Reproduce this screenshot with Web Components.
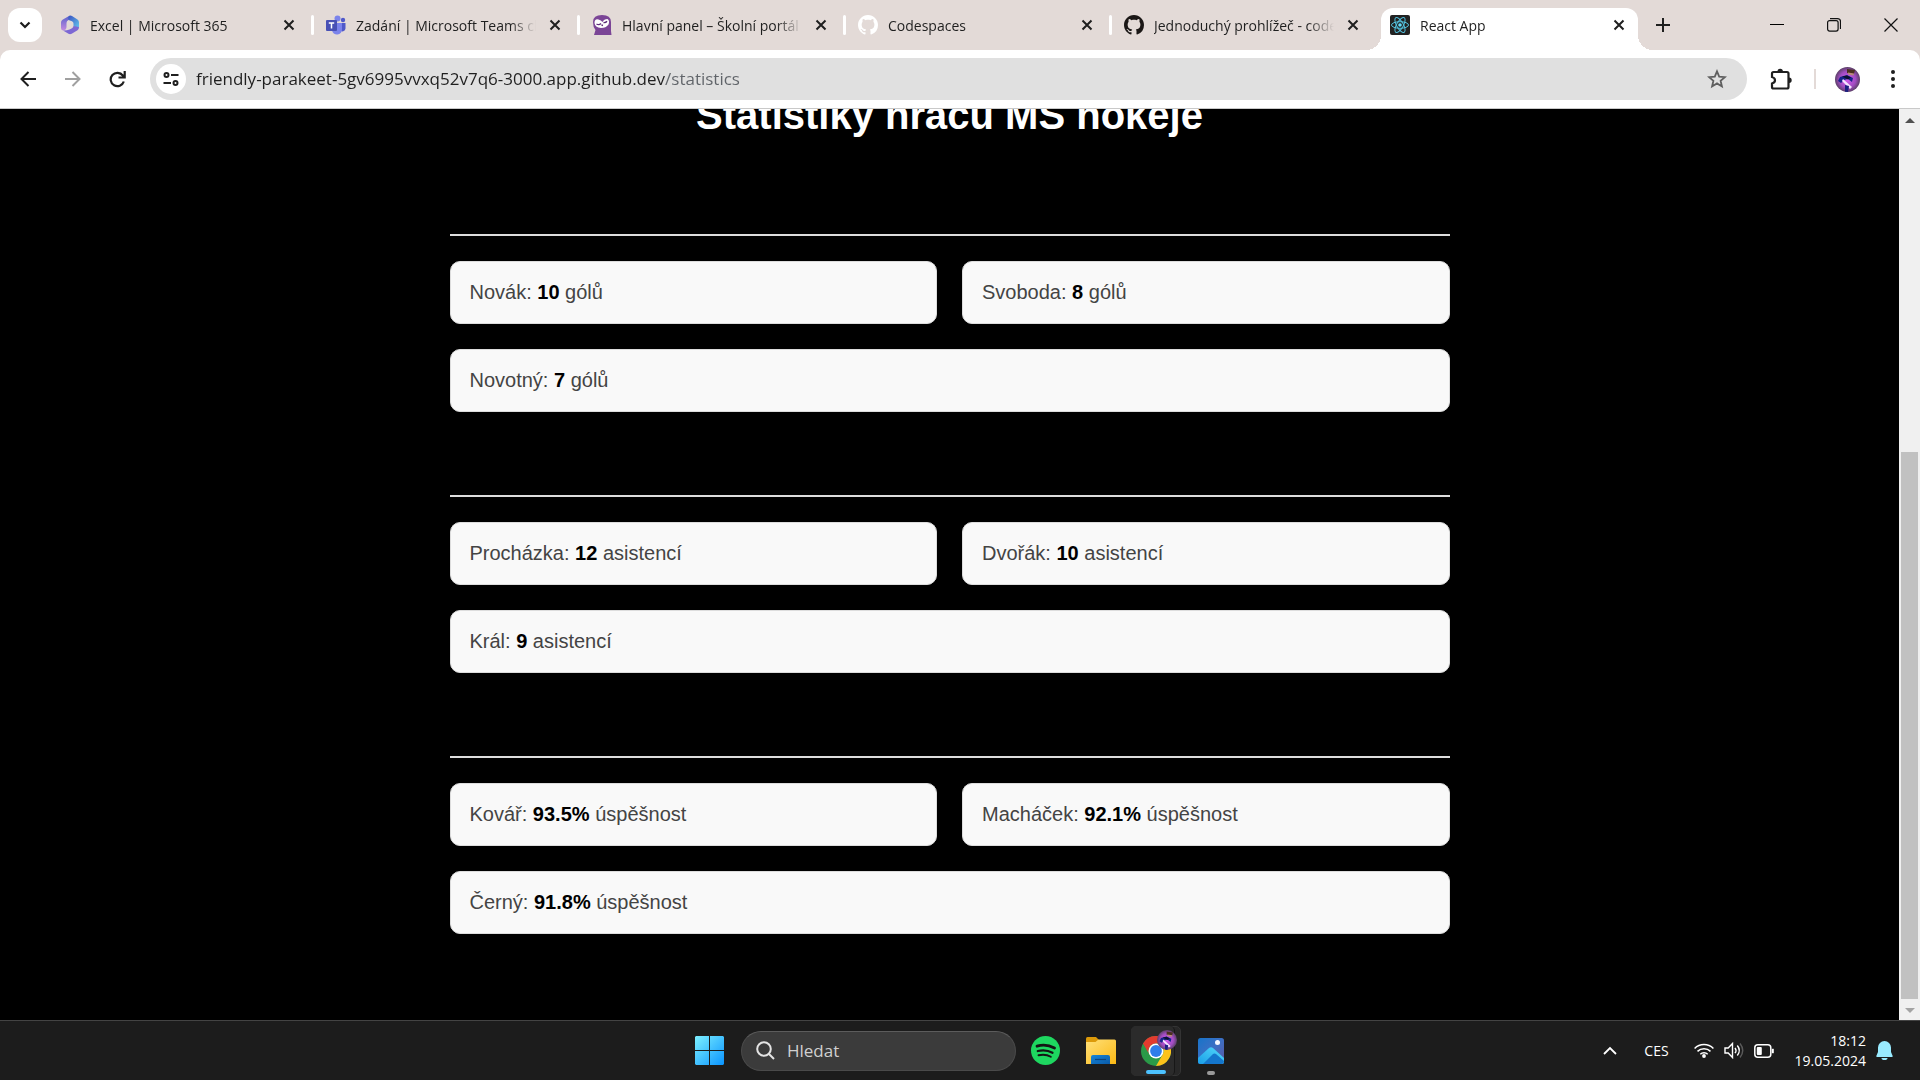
<!DOCTYPE html>
<html lang="cs">
<head>
<meta charset="utf-8">
<title>React App</title>
<style>
  html, body { height: 100%; margin: 0; }
  body { background: #000; overflow: hidden; font-family: "Open Sans", "Noto Sans", sans-serif; }
</style>
</head>
<body>
<desktop-screen></desktop-screen>

<template id="t-desktop">
  <style>
    :host { display: flex; flex-direction: column; height: 100vh; }
    .view { flex: 1; min-height: 0; display: flex; border-top: 1px solid #c9c9c9; }
    stats-page { flex: 1; min-width: 0; }
  </style>
  <tab-strip>
    <browser-tab label="Excel | Microsoft 365">
      <svg slot="icon" width="20" height="20" viewBox="0 0 20 20"><defs><linearGradient id="m1" x1="0" y1="0" x2="1" y2="1"><stop offset="0" stop-color="#3a4fc0"/><stop offset="1" stop-color="#63c9ee"/></linearGradient><linearGradient id="m2" x1="0" y1="0" x2="0" y2="1"><stop offset="0" stop-color="#5a62cc"/><stop offset="1" stop-color="#c48be0"/></linearGradient></defs><path d="M9 1 L2.500 4.700 Q1 5.600 1 7.500 V13 Q1 15 3 15.500 Q6.500 15 6.500 12 V8 Q6.500 6 8.500 5 L12 3 Q11 .2 9 1Z" fill="url(#m2)"/><path d="M9 1 Q10.500 .2 12 1 L17.500 4.500 Q19 5.500 19 7.500 V12 Q18.500 14 16.500 13 L13.500 11 V8.500 Q13.500 7 12 6.300 L8.500 5 Q7.500 3 9 1Z" fill="url(#m1)"/><path d="M3 15.500 L8.500 18.800 Q10 19.600 11.700 18.800 L17.500 15.300 Q19 14.300 19 12 L13.500 11 Q13.300 12.600 12 13.300 L9.500 14.500 Q7 15.600 3 15.500Z" fill="#7d68d4"/></svg>
    </browser-tab>
    <browser-tab label="Zadání | Microsoft Teams classic">
      <svg slot="icon" width="20" height="20" viewBox="0 0 20 20"><circle cx="17" cy="5" r="2.200" fill="#5059c9"/><path d="M14 8h5.500v5.500a3 3 0 0 1-5.500 1.500z" fill="#5059c9"/><circle cx="11.500" cy="3.500" r="3" fill="#7b83eb"/><path d="M6 8h10v6a5 5 0 0 1-10 1z" fill="#7b83eb"/><rect y="5" width="11" height="11" rx="1" fill="#4850b5"/><path d="M2.800 8h5.400M5.500 8v5.500" stroke="#fff" stroke-width="1.500"/></svg>
    </browser-tab>
    <browser-tab label="Hlavní panel – Školní portál">
      <svg slot="icon" width="20" height="20" viewBox="0 0 20 20"><path d="M1 7Q1 0 10 0t9 7v9l.5 4H2l1.500-5Q1 12 1 7Z" fill="#7b4596"/><path d="M2.500 8Q2.500 3.500 6.500 4.500 9 5 10.500 7 12 4 15.500 4 18 5.500 16.500 9.500 14 13 9 13 3 12.500 2.500 8Z" fill="#fff"/><path d="M4.500 9q2.500 1.500 4.500-.5M11.500 7.500q2 .5 3.500-1.200M9.500 10l1.500.5" stroke="#5d2c78" stroke-width="1.400" fill="none"/></svg>
    </browser-tab>
    <browser-tab label="Codespaces">
      <svg slot="icon" width="20" height="20" viewBox="0 0 16 16" fill="#fff"><path d="M8 0C3.580 0 0 3.580 0 8c0 3.540 2.290 6.530 5.470 7.590.4.070.550-.170.550-.380 0-.190-.010-.820-.010-1.490-2.010.370-2.530-.490-2.690-.940-.090-.230-.480-.940-.820-1.130-.280-.150-.680-.520-.010-.530.630-.010 1.080.580 1.230.820.720 1.210 1.870.870 2.330.660.070-.520.280-.870.510-1.070-1.780-.200-3.640-.890-3.640-3.950 0-.870.310-1.590.820-2.150-.080-.200-.360-1.020.080-2.120 0 0 .670-.210 2.200.820.640-.180 1.320-.270 2-.270s1.360.090 2 .270c1.530-1.040 2.200-.820 2.200-.820.440 1.100.160 1.920.080 2.120.510.560.820 1.270.820 2.150 0 3.070-1.870 3.750-3.650 3.950.290.250.540.730.540 1.480 0 1.070-.010 1.930-.010 2.200 0 .210.150.460.550.380A8.010 8.010 0 0 0 16 8c0-4.420-3.580-8-8-8z"/></svg>
    </browser-tab>
    <browser-tab label="Jednoduchý prohlížeč - codespace" last>
      <svg slot="icon" width="20" height="20" viewBox="0 0 16 16" fill="#1b1716"><path d="M8 0C3.580 0 0 3.580 0 8c0 3.540 2.290 6.530 5.470 7.590.4.070.550-.170.550-.380 0-.190-.010-.820-.010-1.490-2.010.370-2.530-.490-2.690-.940-.090-.230-.480-.940-.820-1.130-.280-.150-.680-.520-.010-.530.630-.010 1.080.580 1.230.820.720 1.210 1.870.870 2.330.660.070-.520.280-.870.510-1.070-1.780-.200-3.640-.890-3.640-3.950 0-.870.310-1.590.820-2.150-.080-.200-.360-1.020.080-2.120 0 0 .670-.210 2.200.820.640-.180 1.320-.270 2-.270s1.360.090 2 .270c1.530-1.040 2.200-.820 2.200-.820.440 1.100.160 1.920.080 2.120.510.560.820 1.270.820 2.150 0 3.070-1.870 3.750-3.650 3.950.290.250.540.730.540 1.480 0 1.070-.010 1.930-.010 2.200 0 .210.150.460.550.380A8.010 8.010 0 0 0 16 8c0-4.420-3.580-8-8-8z"/></svg>
    </browser-tab>
    <browser-tab label="React App" active>
      <svg slot="icon" width="20" height="20" viewBox="0 0 20 20"><rect width="20" height="20" rx="2" fill="#222"/><g fill="none" stroke="#53c1de" stroke-width="1"><ellipse cx="10" cy="10" rx="8.500" ry="3.300"/><ellipse cx="10" cy="10" rx="8.500" ry="3.300" transform="rotate(60 10 10)"/><ellipse cx="10" cy="10" rx="8.500" ry="3.300" transform="rotate(120 10 10)"/></g><circle cx="10" cy="10" r="1.800" fill="#61dafb"/></svg>
    </browser-tab>
  </tab-strip>
  <browser-toolbar></browser-toolbar>
  <div class="view">
    <stats-page>
      <stat-group>
        <stat-card>Novák: <b>10</b> gólů</stat-card>
        <stat-card>Svoboda: <b>8</b> gólů</stat-card>
        <stat-card>Novotný: <b>7</b> gólů</stat-card>
      </stat-group>
      <stat-group>
        <stat-card>Procházka: <b>12</b> asistencí</stat-card>
        <stat-card>Dvořák: <b>10</b> asistencí</stat-card>
        <stat-card>Král: <b>9</b> asistencí</stat-card>
      </stat-group>
      <stat-group>
        <stat-card>Kovář: <b>93.5%</b> úspěšnost</stat-card>
        <stat-card>Macháček: <b>92.1%</b> úspěšnost</stat-card>
        <stat-card>Černý: <b>91.8%</b> úspěšnost</stat-card>
      </stat-group>
    </stats-page>
    <page-scrollbar></page-scrollbar>
  </div>
  <task-bar></task-bar>
</template>

<template id="t-strip">
  <style>
    :host { display: flex; height: 50px; background: #e3dad7; padding-left: 8px; }
    button { border: 0; background: none; padding: 0; display: flex; align-items: center; justify-content: center; }
    .find { width: 34px; height: 34px; margin: 8px 6px 0 0; border-radius: 12px; background: #fff; flex: none; }
    .tabs { display: flex; min-width: 0; }
    .new { width: 38px; flex: none; }
    .controls { display: flex; margin-left: auto; padding-right: 1px; }
    .controls button { width: 57px; }
  </style>
  <button class="find" aria-label="Hledat karty"><svg width="12" height="8" viewBox="0 0 12 8" fill="none" stroke="#1c1c1c" stroke-width="2.200"><path d="M1.500 1.500 6 6l4.500-4.500"/></svg></button>
  <div class="tabs"><slot></slot></div>
  <button class="new" aria-label="Nová karta"><svg width="14" height="14" viewBox="0 0 14 14" stroke="#1f1f1f" stroke-width="2"><path d="M7 0v14M0 7h14"/></svg></button>
  <div class="controls">
    <button aria-label="Minimalizovat"><svg width="14" height="14" viewBox="0 0 14 14" stroke="#000"><path d="M0 6.500h14"/></svg></button>
    <button aria-label="Obnovit"><svg width="14" height="14" viewBox="0 0 14 14" stroke="#111" fill="none" stroke-width="1.200"><rect x=".6" y="2.600" width="10.500" height="10.500" rx="2"/><path d="M3 .6h7.500a3 3 0 0 1 3 3V11"/></svg></button>
    <button aria-label="Zavřít"><svg width="14" height="14" viewBox="0 0 14 14" stroke="#111" stroke-width="1.200"><path d="M.5.5l13 13M13.500.5l-13 13"/></svg></button>
  </div>
</template>

<template id="t-tab">
  <style>
    :host { display: flex; flex: 0 1 266px; width: 266px; box-sizing: border-box; align-items: center; padding-left: 12px; height: 50px; position: relative; min-width: 0; }
    ::slotted(svg) { flex: none; display: block; position: relative; }
    button { border: 0; background: none; padding: 0; font: inherit; color: #1f1f1f; }
    .title { flex: 1; min-width: 0; margin-left: 10px; margin-right: 9px; padding-top: 1px; text-align: left; font-size: 14px; line-height: 20px; white-space: nowrap; overflow: hidden; position: relative;
      -webkit-mask-image: linear-gradient(to right, #000 calc(100% - 26px), transparent); mask-image: linear-gradient(to right, #000 calc(100% - 26px), transparent); }
    .close { width: 20px; height: 20px; flex: none; display: flex; align-items: center; justify-content: center; position: relative; }
    .sep { width: 3px; height: 20px; border-radius: 2px; background: #fff; margin-left: 12px; flex: none; }
    :host([active]) .sep, :host([last]) .sep { background: transparent; }
    .shape { display: none; position: absolute; top: 8px; bottom: 0; left: 3px; right: 6px; background: #fff; border-radius: 12px 12px 0 0; }
    .shape::before, .shape::after { content: ""; position: absolute; bottom: 0; width: 15px; height: 15px; }
    .shape::before { left: -15px; background: radial-gradient(circle at 0 0, transparent 15px, #fff 15px); }
    .shape::after { right: -15px; background: radial-gradient(circle at 100% 0, transparent 15px, #fff 15px); }
    :host([active]) .shape { display: block; }
  </style>
  <div class="shape"></div>
  <slot name="icon"></slot>
  <button class="title"></button>
  <button class="close" aria-label="Zavřít kartu"><svg width="12" height="12" viewBox="0 0 12 12" stroke="#1f1f1f" stroke-width="2"><path d="M1.500 1.500l9 9M10.500 1.500l-9 9"/></svg></button>
  <span class="sep"></span>
</template>

<template id="t-toolbar">
  <style>
    :host { display: block; background: #e3dad7; }
    .bar { display: flex; align-items: center; height: 58px; background: #fff; border-radius: 10px 10px 0 0; padding: 0 5px; box-sizing: border-box; }
    button { border: 0; background: none; padding: 0; display: flex; align-items: center; justify-content: center; width: 45px; height: 42px; flex: none; }
    .omni { flex: 1; min-width: 0; display: flex; align-items: center; height: 42px; border-radius: 21px; background: #e0e0e0; margin-left: 10px; padding-left: 6px; box-sizing: border-box; }
    .site { width: 30px; height: 30px; border-radius: 15px; background: #fff; }
    input { flex: 1; min-width: 0; border: 0; outline: 0; padding: 0; margin-left: 10px; height: 30px; font: 17px/30px "Open Sans", "Noto Sans", sans-serif; color: #1f1f1f;
      background: linear-gradient(to right, #1f1f1f 469px, #5f6368 469px); -webkit-background-clip: text; background-clip: text; -webkit-text-fill-color: transparent; }
    .star { width: 60px; }
    .ext { width: 67px; }
    .sep { width: 2px; height: 20px; background: #e3dad7; margin-right: 9px; }
  </style>
  <div class="bar">
    <button aria-label="Zpět"><svg width="16" height="16" viewBox="0 0 16 16" fill="none" stroke="#1f1f1f" stroke-width="2"><path d="M16 8H1.500M8.500 1 1.500 8l7 7"/></svg></button>
    <button aria-label="Vpřed"><svg width="16" height="16" viewBox="0 0 16 16" fill="none" stroke="#a0a0a0" stroke-width="2"><path d="M0 8h14.500M7.500 1l7 7-7 7"/></svg></button>
    <button aria-label="Načíst znovu"><svg width="17" height="17" viewBox="0 0 17 17" fill="none" stroke="#1f1f1f" stroke-width="2.200"><path d="M14.800 10.500A6.700 6.700 0 1 1 13.800 4.500L15 6M15.700 0v6.500H9.500"/></svg></button>
    <div class="omni">
      <button class="site" aria-label="Informace o webu"><svg width="16" height="14" viewBox="0 0 16 14" fill="none" stroke="#1f1f1f" stroke-width="2"><circle cx="3.500" cy="3" r="2"/><path d="M8 3h7.500M.5 11H8"/><circle cx="12.500" cy="11" r="2"/></svg></button>
      <input aria-label="Adresa" value="friendly-parakeet-5gv6995vvxq52v7q6-3000.app.github.dev/statistics" spellcheck="false">
      <button class="star" aria-label="Záložka"><svg width="20" height="20" viewBox="0 0 20 20" fill="none" stroke="#5f5f5f" stroke-width="1.800"><path d="M10 2.300l2.200 5.300 5.700.5-4.300 3.700 1.300 5.600L10 14.400l-4.900 3 1.300-5.600L2.100 8.100l5.700-.5z"/></svg></button>
    </div>
    <button class="ext" aria-label="Rozšíření"><svg width="22" height="22" viewBox="0 0 22 22"><path d="M3.500 4H17a1.500 1.500 0 0 1 1.500 1.500V19A1.500 1.500 0 0 1 17 20.500H3.500A1.500 1.500 0 0 1 2 19v-3.500q3-1 3-3.300T2 9V5.500A1.500 1.500 0 0 1 3.500 4Z" fill="none" stroke="#1f1f1f" stroke-width="2.200"/><path d="M7.500 3.500a2.700 2.700 0 0 1 5.400 0zM19 9.500a2.700 2.700 0 0 1 0 5.400z" fill="#1f1f1f"/></svg></button>
    <span class="sep"></span>
    <button aria-label="Profil"><avatar-pic style="--d:25px"></avatar-pic></button>
    <button aria-label="Nabídka"><svg width="4" height="18" viewBox="0 0 4 18" fill="#1f1f1f"><circle cx="2" cy="2" r="2"/><circle cx="2" cy="9" r="2"/><circle cx="2" cy="16" r="2"/></svg></button>
  </div>
</template>

<template id="t-avatar">
  <style>:host { display: block; width: var(--d); height: var(--d); } svg { display: block; width: 100%; height: 100%; }</style>
  <svg viewBox="0 0 25 25"><defs><clipPath id="c"><circle cx="12.500" cy="12.500" r="12.500"/></clipPath><radialGradient id="g"><stop offset="0" stop-color="#d45cf0"/><stop offset=".65" stop-color="#a04cc0"/><stop offset="1" stop-color="#5c4068"/></radialGradient></defs><g clip-path="url(#c)"><rect width="25" height="25" fill="url(#g)"/><path d="M12 2l8 1-1 4-7-1z" fill="#4a3020"/><path d="M13 5.500l6 1-.5 2-5.500-1z" fill="#b98a78"/><path d="M3 14l2-4 7-2 6 3-1 4-4-3-4 1-3 3z" fill="#16238a"/><path d="M7 9.500l5-1 4 2-3 2z" fill="#0c1030"/><path d="M8 12l9 8-2 2-8-8z" fill="#f6e4ff"/><path d="M10 18l4 1-1 6h-3z" fill="#1c2080"/></g></svg>
</template>

<template id="t-page">
  <style>
    :host { display: flex; flex-direction: column; justify-content: flex-end; align-items: center; overflow: hidden; background: #000; font-family: "Liberation Sans", Arial, sans-serif; padding: 0 20px; box-sizing: border-box; }
    h1 { margin: 0 0 96px; color: #fff; font-size: 40px; line-height: 46px; flex: none; }
    main { width: 100%; max-width: 1000px; display: flex; flex-direction: column; gap: 83px; flex: none; padding-bottom: 86px; }
  </style>
  <h1>Statistiky hráčů MS hokeje</h1>
  <main><slot></slot></main>
</template>

<template id="t-group">
  <style>
    :host { display: flex; flex-wrap: wrap; gap: 25px; border-top: 2px solid #ddd; padding-top: 25px; }
    ::slotted(*) { flex: 1 1 400px; }
  </style>
  <slot></slot>
</template>

<template id="t-card">
  <style>
    :host { display: block; box-sizing: border-box; background: #f9f9f9; border: 1px solid #ddd; border-radius: 10px; padding: 19px; font-size: 20px; line-height: 23px; color: #444; }
    ::slotted(b) { color: #000; }
  </style>
  <slot></slot>
</template>

<template id="t-scroll">
  <style>
    :host { display: flex; flex-direction: column; align-items: center; width: 21px; background: #f0f0f0; }
    svg { display: block; padding: 9px 0 7px; }
    .track { flex: 1; width: 17px; display: flex; flex-direction: column; justify-content: flex-end; }
    .thumb { height: 63%; background: #c1c1c1; }
  </style>
  <svg width="10" height="5" viewBox="0 0 10 5"><path d="M5 0l5 5H0z" fill="#505050"/></svg>
  <div class="track"><div class="thumb"></div></div>
  <svg width="10" height="5" viewBox="0 0 10 5"><path d="M0 0h10L5 5z" fill="#a3a3a3"/></svg>
</template>

<template id="t-taskbar">
  <style>
    :host { display: grid; grid-template-columns: 1fr auto 1fr; align-items: center; height: 60px; box-sizing: border-box; border-top: 1px solid #434343; background: #1c1c1c; color: #fff; }
    button { border: 0; background: none; padding: 0; font: inherit; color: inherit; display: flex; align-items: center; justify-content: center; position: relative; height: 50px; }
    svg { display: block; flex: none; }
    .mid { grid-column: 2; display: flex; align-items: center; }
    .mid button { width: 55px; }
    .mid .start { width: 55px; margin-right: 4px; }
    .search { display: flex; align-items: center; gap: 12px; width: 275px; height: 40px; box-sizing: border-box; border: 1px solid #4a4a4a; border-top-color: #5c5c5c; border-radius: 20px; background: #3b3b3b; padding: 0 14px; margin-right: 2px; }
    input { flex: 1; min-width: 0; background: none; border: 0; outline: 0; padding: 0; font: 17px/24px "Open Sans", "Noto Sans", sans-serif; }
    input::placeholder { color: #d0d0d0; opacity: 1; }
    .mid .chrome { width: 50px; margin: 0 2px 0 3px; box-sizing: border-box; border-radius: 5px; background: #272727; border: 1px solid #343434; }
    .front { position: absolute; left: -1px; top: -1px; bottom: -1px; width: 44px; box-sizing: border-box; border-radius: 5px; background: #2b2b2b; border-right: 1px solid #171717; }
    .chrome svg { position: relative; }
    avatar-pic { position: absolute; left: 25px; top: 3px; }
    .mark { position: absolute; bottom: 1px; height: 4px; border-radius: 2px; width: 20px; left: 14px; background: #4cc2ff; }
    .mark.dim { width: 8px; left: 24px; background: #9a9a9a; }
    .tray { display: flex; align-items: center; justify-content: flex-end; padding-right: 27px; font-size: 14px; }
    .up { width: 40px; margin-right: 14px; }
    .status { gap: 10px; margin: 0 21px 0 25px; }
    .clock { flex-direction: column; align-items: flex-end; line-height: 20px; margin-right: 10px; }
  </style>
  <div class="mid">
    <button class="start" aria-label="Start"><svg width="29" height="29" viewBox="0 0 29 29"><defs><linearGradient id="w" x1="0" y1="0" x2="1" y2="1"><stop offset="0" stop-color="#7df0ff"/><stop offset="1" stop-color="#0a94ff"/></linearGradient></defs><path d="M1 0H14V14H0V1ZM15 0H28L29 1V14H15ZM0 15H14V29H1L0 28ZM15 15H29V28L28 29H15Z" fill="url(#w)"/></svg></button>
    <label class="search"><svg width="19" height="19" viewBox="0 0 19 19" fill="none" stroke="#e4e4e4" stroke-width="2"><circle cx="8" cy="8" r="6.800"/><path d="M13 13l5 5"/></svg><input placeholder="Hledat" aria-label="Hledat"></label>
    <button aria-label="Spotify"><svg width="29" height="29" viewBox="0 0 29 29" fill="none" stroke="#141414" stroke-linecap="round"><circle cx="14.500" cy="14.500" r="14.500" fill="#1ed760" stroke="none"/><path d="M6 10.200q9-2.700 17.500 1.800" stroke-width="2.800"/><path d="M6.800 15q8-2 14.700 1.700" stroke-width="2.300"/><path d="M7.500 19.300q7-1.600 12.300 1.500" stroke-width="1.900"/></svg></button>
    <button aria-label="Průzkumník"><svg width="30" height="27" viewBox="0 0 30 27"><defs><linearGradient id="f" x1="0" y1="0" x2="1" y2="1"><stop offset="0" stop-color="#ffe07a"/><stop offset="1" stop-color="#fbb914"/></linearGradient><linearGradient id="fb" x1="0" y1="0" x2="1" y2="1"><stop offset="0" stop-color="#1685d8"/><stop offset="1" stop-color="#0a5aa8"/></linearGradient></defs><path d="M0 1.500Q0 0 1.500 0H10l3 3-3 4H0Z" fill="#dc9a0a"/><path d="M0 5h9.500l3-2.500H28.500Q30 2.500 30 4V27H0Z" fill="url(#f)"/><path d="M5 27V20q0-2 2-2H22q2 0 2 2v7Z" fill="url(#fb)"/><path d="M9 22.500H20" stroke="#0a4480" stroke-width="1.200"/></svg></button>
    <button class="chrome" aria-label="Google Chrome"><span class="front"></span><svg width="30" height="30" viewBox="0 0 30 30"><circle cx="15" cy="15" r="15" fill="#2a9a48"/><path d="M2 7.500A15 15 0 0 1 28 7.500H15A7.500 7.500 0 0 0 8.500 18.750Z" fill="#e33b2e"/><path d="M28 7.500A15 15 0 0 1 15 30L21.500 18.750A7.500 7.500 0 0 0 15 7.500Z" fill="#fcc21b"/><circle cx="15" cy="15" r="7.500" fill="#fff"/><circle cx="15" cy="15" r="5.900" fill="#2f7de9"/></svg><avatar-pic style="--d:20px"></avatar-pic><span class="mark"></span></button>
    <button aria-label="Fotky"><svg width="26" height="26" viewBox="0 0 26 26"><defs><linearGradient id="p" x1="0" y1="0" x2="1" y2="1"><stop offset="0" stop-color="#1774c9"/><stop offset=".5" stop-color="#3d6fc4"/><stop offset="1" stop-color="#5d55a0"/></linearGradient><linearGradient id="q" x1="0" y1="1" x2="1" y2="0"><stop offset="0" stop-color="#1a9ee8"/><stop offset="1" stop-color="#54dafa"/></linearGradient></defs><rect width="26" height="26" rx="2.500" fill="url(#p)"/><path d="M0 20L11 10q2-1.600 4 0l11 10v3.500q0 2.500-2.500 2.500H2.500Q0 26 0 23.500Z" fill="url(#q)"/><path d="M5 26L15 16q1.500-1 3 0l8 7q0 3-2.500 3Z" fill="#1476cc"/><circle cx="19.500" cy="4.500" r="2.500" fill="#f4f8ff"/></svg><span class="mark dim"></span></button>
  </div>
  <div class="tray">
    <button class="up" aria-label="Skryté ikony"><svg width="14" height="9" viewBox="0 0 14 9" fill="none" stroke="#fff" stroke-width="1.800"><path d="M1 8l6-6 6 6"/></svg></button>
    <button>CES</button>
    <button class="status" aria-label="Síť, hlasitost, baterie">
      <svg width="20" height="15" viewBox="0 0 20 15" fill="none" stroke="#fff" stroke-width="1.500"><path d="M.6 5.500a13.300 13.300 0 0 1 18.800 0M3.500 8.400a9.200 9.200 0 0 1 13 0M6.300 11.200a5.200 5.200 0 0 1 7.400 0"/><circle cx="10" cy="13" r="1.900" fill="#fff" stroke="none"/></svg>
      <svg width="20" height="17" viewBox="0 0 20 17" fill="none" stroke="#fff" stroke-width="1.400"><path d="M1 6h3.200L8.500 1.500v14L4.200 11H1z"/><path d="M11 5.800q2 2.700 0 5.400M13.300 3.500q4 5 0 10"/><path d="M16 1.500q5.500 7 0 14" stroke="#5a5a5a"/></svg>
      <svg width="20" height="14" viewBox="0 0 20 14" fill="none" stroke="#fff" stroke-width="1.500"><rect x=".8" y=".8" width="16" height="12.400" rx="3"/><rect x="2.800" y="3" width="5" height="8" rx="1" fill="#fff" stroke="none"/><path d="M18.800 4.800v4.400" stroke-width="2"/></svg>
    </button>
    <button class="clock"><span>18:12</span><span>19.05.2024</span></button>
    <button aria-label="Oznámení"><svg width="17" height="19" viewBox="0 0 17 19" fill="#99ebff"><path d="M8.500 0a6.500 6.500 0 0 0-6.500 6.500V11L.3 15q-.2 1 .8 1h14.800q1 0 .8-1L15 11V6.500A6.500 6.500 0 0 0 8.500 0ZM5.500 17h6a3 2 0 0 1-6 0Z"/></svg></button>
  </div>
</template>

<script>
  class Templated extends HTMLElement {
    constructor() {
      super();
      const tpl = document.getElementById(this.constructor.template);
      this.attachShadow({ mode: "open" }).appendChild(tpl.content.cloneNode(true));
    }
  }
  class BrowserTab extends Templated {
    static template = "t-tab";
    connectedCallback() {
      const title = this.shadowRoot.querySelector(".title");
      title.textContent = this.getAttribute("label");
    }
  }
  customElements.define("browser-tab", BrowserTab);
  customElements.define("avatar-pic", class extends Templated { static template = "t-avatar"; });
  customElements.define("tab-strip", class extends Templated { static template = "t-strip"; });
  customElements.define("browser-toolbar", class extends Templated { static template = "t-toolbar"; });
  customElements.define("stat-card", class extends Templated { static template = "t-card"; });
  customElements.define("stat-group", class extends Templated { static template = "t-group"; });
  customElements.define("stats-page", class extends Templated { static template = "t-page"; });
  customElements.define("page-scrollbar", class extends Templated { static template = "t-scroll"; });
  customElements.define("task-bar", class extends Templated { static template = "t-taskbar"; });
  customElements.define("desktop-screen", class extends Templated { static template = "t-desktop"; });
</script>
</body>
</html>
